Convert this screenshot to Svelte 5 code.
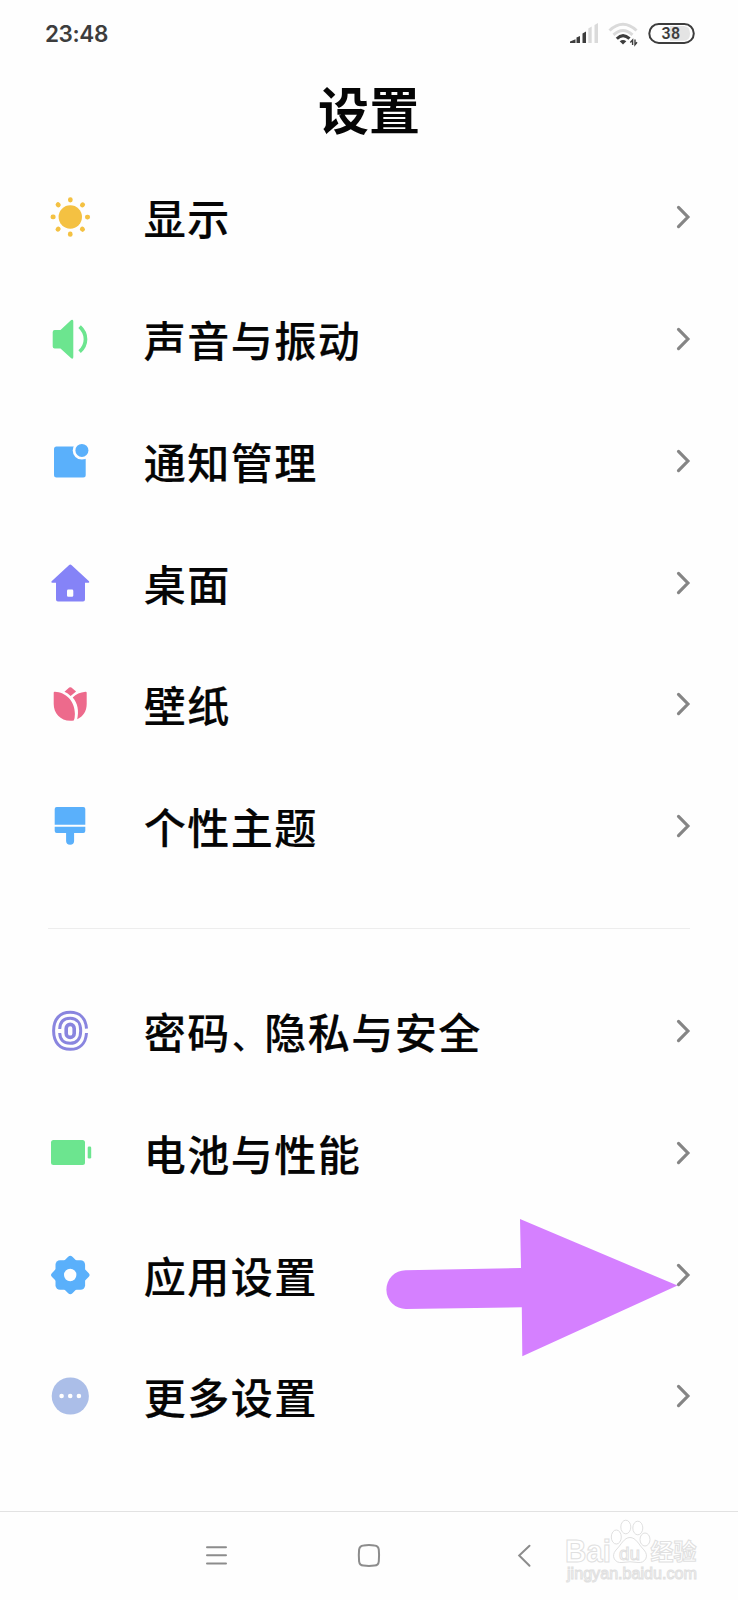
<script>
  const groups = [
    [
      ['sun', '显示'],
      ['sound', '声音与振动'],
      ['notice', '通知管理'],
      ['home', '桌面'],
      ['tulip', '壁纸'],
      ['brush', '个性主题'],
    ],
    [
      ['finger', '密码、隐私与安全'],
      ['battery', '电池与性能'],
      ['gear', '应用设置'],
      ['more', '更多设置'],
    ],
  ];
  const rays = [0, 45, 90, 135, 180, 225, 270, 315];
</script>

{#snippet icon(name)}
  <svg class="icon" viewBox="0 0 48 48" width="48" height="48">
    {#if name === 'sun'}
      <g fill="#f4c142">
        <circle cx="24.3" cy="24" r="11.700" />
        {#each rays as r}
          <rect x="22" y="4.2" width="4.700" height="5.200" rx="2.300" transform="rotate({r} 24.3 24)" />
        {/each}
      </g>
    {:else if name === 'sound'}
      <path fill="#6ce58f" d="M8.7 15H14.5L25.2 5Q27.3 4 27.3 6.300V42Q27.3 44.400 25.200 43.300L14.500 33.400H8.700Q6.700 33.400 6.700 31.400V17Q6.700 15 8.700 15Z" />
      <path d="M33.600 11.700Q39.500 17 39.500 24.200T33.600 36.600" fill="none" stroke="#6ce58f" stroke-width="3.700" />
    {:else if name === 'notice'}
      <rect x="8" y="9.400" width="31.700" height="31" rx="2.500" fill="#5ab0fb" />
      <circle cx="35.900" cy="13.400" r="9.200" fill="#fefefe" />
      <circle cx="35.900" cy="13.400" r="6.500" fill="#5ab0fb" />
    {:else if name === 'home'}
      <path fill="#8583f7" fill-rule="evenodd" d="M22.900 6.200Q24.300 5 25.700 6.200L43 22.300Q43.800 23.600 42.600 23.700H39V40.600Q39 42.600 37 42.600H12Q10 42.600 10 40.600V23.700H6.200Q4.600 23.500 5.600 22.300ZM22.300 30.600Q21 30.600 21 31.900V36.400Q21 37.700 22.300 37.700H26Q27.300 37.700 27.300 36.400V31.900Q27.300 30.600 26 30.600Z" />
    {:else if name === 'tulip'}
      <g fill="#ed6a8c">
        <path d="M18.500 11.800L23.200 7.600Q24.300 6.800 25.400 7.600L30.100 11.600L24.600 15.900Q22 13.200 18.500 11.800Z" />
        <path d="M7.700 12.700Q7.700 11.600 8.900 11.700C19.500 12.300 28.900 20.500 28.900 34Q28.900 38 27.800 40.500C15.500 42.300 7.700 34 7.700 24Z" />
        <path d="M40.700 12.700Q40.700 11.600 39.500 11.700Q31.500 12.500 26.700 17.500C31.900 23.500 33 31 31.200 39.300C37.300 36.500 40.700 31 40.700 24Z" />
      </g>
    {:else if name === 'brush'}
      <g fill="#5ab0fb">
        <path d="M10.700 5H37.300Q39.300 5 39.300 7V22.800H8.700V7Q8.700 5 10.700 5Z" />
        <path d="M8.700 24.800H39.300V29Q39.300 31 37.300 31H28.100V39Q28.100 42.700 24.100 42.700T20.100 39V31H10.700Q8.700 31 8.700 29Z" />
      </g>
    {:else if name === 'finger'}
      <g fill="none" stroke="#8985df" stroke-width="3">
        <path d="M40.500 21.700C39.800 11 33.500 5.300 24.200 5.300C14 5.300 7.600 12 7.600 23.800S14 42.300 24.200 42.300C33.500 42.300 39.800 36.700 40.500 26" />
        <path d="M13.700 22C14 15 17.800 11.300 24.200 11.300C31 11.300 34.700 16 34.700 23.800S31 36.300 24.200 36.300C17.800 36.300 14 32.700 13.700 26" />
        <rect x="20.200" y="17.400" width="8" height="13" rx="4" stroke-width="3.600" />
      </g>
    {:else if name === 'battery'}
      <rect x="5" y="11" width="34" height="25" rx="2.500" fill="#6ce58f" />
      <rect x="41.700" y="17.500" width="3.500" height="12" rx="1.300" fill="#6ce58f" />
    {:else if name === 'gear'}
      <g fill="#5ab0fb">
        <rect x="9.500" y="9.200" width="29.600" height="29.600" rx="4.500" />
        <rect x="9.900" y="9.600" width="28.800" height="28.800" rx="3" transform="rotate(45 24.300 24)" />
      </g>
      <circle cx="24.200" cy="24" r="6.200" fill="#fefefe" />
    {:else}
      <circle cx="24.300" cy="24" r="18.600" fill="#abbee8" />
      <g fill="#fff"><circle cx="15.600" cy="24" r="2.300" /><circle cx="24.200" cy="24" r="2.300" /><circle cx="32.900" cy="24" r="2.300" /></g>
    {/if}
  </svg>
{/snippet}

<div class="phone">
  <header class="status">
    <span class="clock">23:48</span>
    <svg class="signals" viewBox="0 0 130 26" width="130" height="26">
      <g fill="#3d3d3d">
        <path d="M0 19.500L5.500 17.200V21H0Z" /><path d="M6.500 15.500L10 14V21H6.500Z" /><path d="M12.500 11.500L16 9.500V21H12.500Z" />
      </g>
      <g fill="#dadada"><path d="M18.300 6.500L21.700 4.500V21H18.300Z" /><path d="M24.500 3L28 1V21H24.500Z" /></g>
      <g fill="none" stroke-width="3">
        <path d="M39.500 8.500Q53 -4 66.500 8.500" stroke="#dadada" />
        <path d="M43.500 12.800Q53 4.300 62.500 12.800" stroke="#dadada" />
        <path d="M46.800 16.700Q53 10.500 59.500 16.700" stroke="#3d3d3d" />
      </g>
      <path d="M49.700 19.300Q53 16.800 56.300 19.300L53 22.500Z" fill="#3d3d3d" />
      <path d="M60.300 20.500L62.600 18V23M65 17.500V22.800L67 20.300" fill="none" stroke="#3d3d3d" stroke-width="1.400" />
      <rect x="79.300" y="1.900" width="44.500" height="19" rx="9.500" fill="#fff" stroke="#3d3d3d" stroke-width="2" />
      <path d="M100 4H114Q120 4.500 120 11.400T114 18.800H100Z" fill="#e4e4e4" />
      <text x="101" y="17.400" text-anchor="middle" class="pct">38</text>
    </svg>
  </header>
  <h1>设置</h1>
  <main>
    {#each groups as rows}
      <section>
        {#each rows as [name, label]}
          <div class="row">
            {@render icon(name)}
            <span class="label">{#each label.split('、') as part, i}{#if i}<span class="comma">、</span>{/if}{part}{/each}</span>
            <svg class="chevron" viewBox="0 0 16 24" width="16" height="24">
              <path d="M2.500 2.400L11.900 12L2.500 21.600" fill="none" stroke="#858585" stroke-width="3.200" stroke-linecap="round" />
            </svg>
          </div>
        {/each}
      </section>
    {/each}
  </main>
  <nav>
    <svg viewBox="0 1512 738 88" width="738" height="88">
      <g fill="none" stroke="#8c8c8c" stroke-width="2" stroke-linecap="round">
        <path d="M207 1547.200H226M207 1555.300H226M207 1563.500H226" />
        <path d="M363.500 1545.400Q368.900 1544.800 374.500 1545.400Q378.400 1545.700 378.800 1549.700Q379.400 1555.500 378.800 1561.300Q378.400 1565.300 374.500 1565.600Q368.900 1566.200 363.500 1565.600Q359.600 1565.300 359.100 1561.300Q358.500 1555.500 359.100 1549.700Q359.600 1545.700 363.500 1545.400Z" />
        <path d="M529.500 1545.700L519.200 1555.500L529.500 1565.700" />
      </g>
      <g class="mark">
        <text x="565" y="1561.500" font-size="30.500" textLength="46" lengthAdjust="spacingAndGlyphs">Bai</text>
        <ellipse cx="616.300" cy="1537" rx="5" ry="7" /><ellipse cx="625.800" cy="1527" rx="5" ry="6.800" /><ellipse cx="637.800" cy="1528" rx="5" ry="6.800" /><ellipse cx="645" cy="1539.500" rx="5" ry="6.500" />
        <path d="M630 1537.500C636 1537.500 639 1545 644 1550C649.500 1556 645 1563.500 638 1562.500Q630 1561 622 1562.500C615 1563.500 610.500 1556 616 1550C621 1545 624 1537.500 630 1537.500Z" />
        <text x="619" y="1559.500" font-size="19" font-weight="400" textLength="21">du</text>
        <text x="650.500" y="1560" font-size="23" textLength="46">经验</text>
        <text x="567" y="1578.500" font-size="16" font-weight="400" textLength="130" lengthAdjust="spacingAndGlyphs">jingyan.baidu.com</text>
      </g>
    </svg>
  </nav>
  <svg class="pointer" viewBox="386 1218 292 140" width="292" height="140">
    <path fill="#d580ff" d="M405.500 1270.200L521 1268L520 1219L677.500 1285.600L522.300 1356.300L521.800 1307.200L406 1309A19.400 19.400 0 0 1 405.500 1270.200Z" />
  </svg>
</div>

<style>
  :global(body) { margin: 0; background: #fefefe; }
  .phone {
    position: relative;
    display: flex;
    flex-direction: column;
    width: 738px;
    height: 1600px;
    overflow: hidden;
    background: #fefefe;
    color: #050505;
    font-family: "Noto Sans CJK SC", sans-serif;
  }
  .status {
    display: flex;
    flex: none;
    justify-content: space-between;
    box-sizing: border-box;
    height: 68px;
    padding: 22px 38px 0 45px;
  }
  .clock {
    color: #3d3d3d;
    font: 600 22.500px/24px Inter, sans-serif;
    letter-spacing: -0.400px;
  }
  .pct { fill: #3d3d3d; font: 600 16px Roboto, sans-serif; letter-spacing: 0.300px; }
  h1 {
    flex: none;
    height: 88.500px;
    margin: 0;
    font-size: 51px;
    line-height: 81px;
    font-weight: 700;
    text-align: center;
  }
  main { flex: 1; }
  section + section {
    margin-top: 41.200px;
    padding-top: 42px;
    background: linear-gradient(#ededed, #ededed) 48px 0 / 642px 1px no-repeat;
  }
  .row {
    display: flex;
    align-items: center;
    height: 121.750px;
    padding: 0 46px;
  }
  .icon { flex: none; }
  .label {
    flex: 1;
    padding-left: 49.700px;
    font-size: 42px;
    font-weight: 500;
    line-height: 60px;
    letter-spacing: 1.500px;
    white-space: nowrap;
    -webkit-text-stroke: 0.200px #050505;
  }
  .comma { margin-left: 1.500px; font-size: 32px; line-height: 1; letter-spacing: 0; }
  .chevron { flex: none; }
  nav { flex: none; height: 88px; border-top: 1px solid #e2e2e2; }
  nav svg { display: block; }
  .mark {
    fill: #fff;
    stroke: #e0e0e0;
    stroke-width: 1;
    font-family: "Liberation Sans", "Noto Sans CJK SC", sans-serif;
    font-weight: 700;
  }
  .pointer { position: absolute; left: 386px; top: 1218px; }
</style>
